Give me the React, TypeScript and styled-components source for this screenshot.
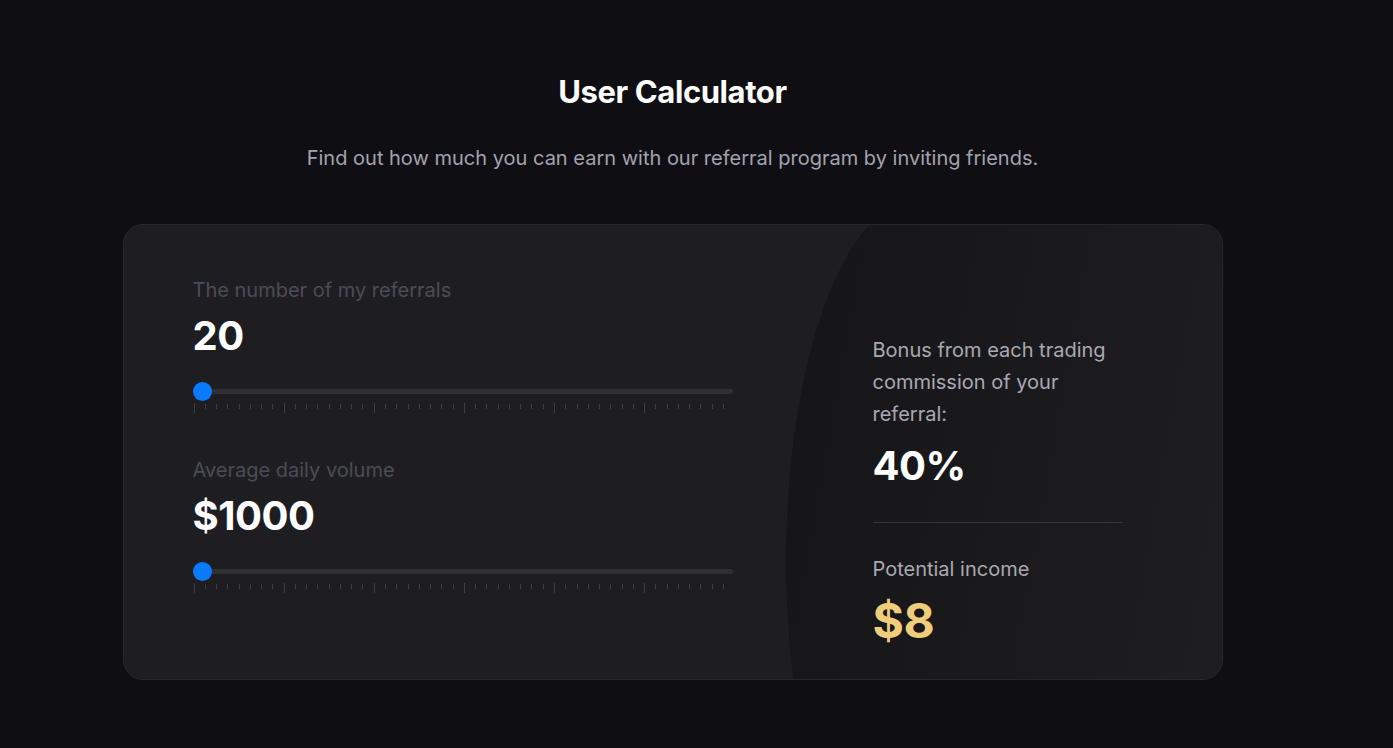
import React from "react";
import styled, { createGlobalStyle } from "styled-components";

const Global = createGlobalStyle`
  html, body { margin: 0; padding: 0; background: #0f0f13; }
  body { font-family: Inter, "Noto Sans", sans-serif; -webkit-font-smoothing: antialiased; }
  * { box-sizing: border-box; }
`;

const Page = styled.main`
  width: 1345px;
  min-height: 748px;
  padding-top: 74px;
  display: flex;
  flex-direction: column;
  align-items: center;
`;

const Title = styled.h1`
  margin: 0;
  font-size: 31px;
  line-height: 36px;
  font-weight: 700;
  color: #ffffff;
  letter-spacing: -0.4px;
`;

const Subtitle = styled.p`
  margin: 34px 0 0;
  font-size: 20px;
  line-height: 28px;
  color: #a3a3ad;
`;

const Card = styled.section`
  position: relative;
  margin-top: 52px;
  width: 1100px;
  height: 456px;
  border: 1px solid #27272c;
  border-radius: 20px;
  background: #1e1e22;
  overflow: hidden;
  display: flex;
`;

const Curve = styled.div`
  position: absolute;
  left: 662px;
  top: -24px;
  right: 0;
  height: 720px;
  border-top-left-radius: 130px 360px;
  border-bottom-left-radius: 130px 360px;
  background: linear-gradient(100deg, #151518 0%, #19191c 40%, #1f1f22 100%);
`;

const Left = styled.div`
  position: relative;
  width: 610px;
  padding: 51px 0 0 69px;
  display: flex;
  flex-direction: column;
`;

const Group = styled.div<{ $first?: boolean }>`
  display: flex;
  flex-direction: column;
  margin-top: ${(p) => (p.$first ? "0" : "43px")};
`;

const FieldLabel = styled.div`
  font-size: 20px;
  line-height: 28px;
  color: #4c4c54;
`;

const Value = styled.div<{ $gold?: boolean; $size?: number }>`
  font-size: ${(p) => p.$size ?? 40}px;
  line-height: ${(p) => Math.round((p.$size ?? 40) * 1.2)}px;
  font-weight: 700;
  letter-spacing: -0.5px;
  color: ${(p) => (p.$gold ? "#f0cd7b" : "#ffffff")};
`;

const SliderWrap = styled.div`
  position: relative;
  margin-top: 21px;
  width: 540px;
  height: 20px;
  display: flex;
  align-items: center;
`;

const Track = styled.div`
  width: 100%;
  height: 5px;
  border-radius: 3px;
  background: #2f2f34;
`;

const Thumb = styled.div`
  position: absolute;
  left: 0;
  top: 0.5px;
  width: 19px;
  height: 19px;
  border-radius: 50%;
  background: #0a7aff;
`;

const Ticks = styled.div`
  margin: 2px 0 0 1px;
  width: 531px;
  height: 10px;
  display: flex;
  justify-content: space-between;
  align-items: flex-start;
`;

const Tick = styled.span<{ $major: boolean }>`
  width: 1px;
  height: ${(p) => (p.$major ? 10 : 5)}px;
  margin-top: ${(p) => (p.$major ? 0 : 1)}px;
  background: #3d3d43;
`;

const Right = styled.div`
  position: relative;
  margin-left: 139px;
  padding-top: 109px;
  width: 250px;
  display: flex;
  flex-direction: column;
`;

const InfoLabel = styled.div`
  font-size: 20px;
  line-height: 32px;
  color: #a9a9b2;
`;

const Divider = styled.hr`
  margin: 32px 0 30px;
  width: 250px;
  border: 0;
  height: 1px;
  background: #36363c;
`;

const Slider: React.FC = () => (
  <>
    <SliderWrap>
      <Track />
      <Thumb />
    </SliderWrap>
    <Ticks>
      {Array.from({ length: 48 }, (_, i) => (
        <Tick key={i} $major={i % 8 === 0} />
      ))}
    </Ticks>
  </>
);

export default function App() {
  return (
    <>
      <Global />
      <Page>
        <Title>User Calculator</Title>
        <Subtitle>
          Find out how much you can earn with our referral program by inviting friends.
        </Subtitle>
        <Card>
          <Curve />
          <Left>
            <Group $first>
              <FieldLabel>The number of my referrals</FieldLabel>
              <Value style={{ marginTop: 8 }}>20</Value>
              <Slider />
            </Group>
            <Group>
              <FieldLabel>Average daily volume</FieldLabel>
              <Value style={{ marginTop: 8 }}>$1000</Value>
              <Slider />
            </Group>
          </Left>
          <Right>
            <InfoLabel>Bonus from each trading commission of your referral:</InfoLabel>
            <Value style={{ marginTop: 12 }}>40%</Value>
            <Divider />
            <InfoLabel>Potential income</InfoLabel>
            <Value $gold $size={48} style={{ marginTop: 7 }}>
              $8
            </Value>
          </Right>
        </Card>
      </Page>
    </>
  );
}
